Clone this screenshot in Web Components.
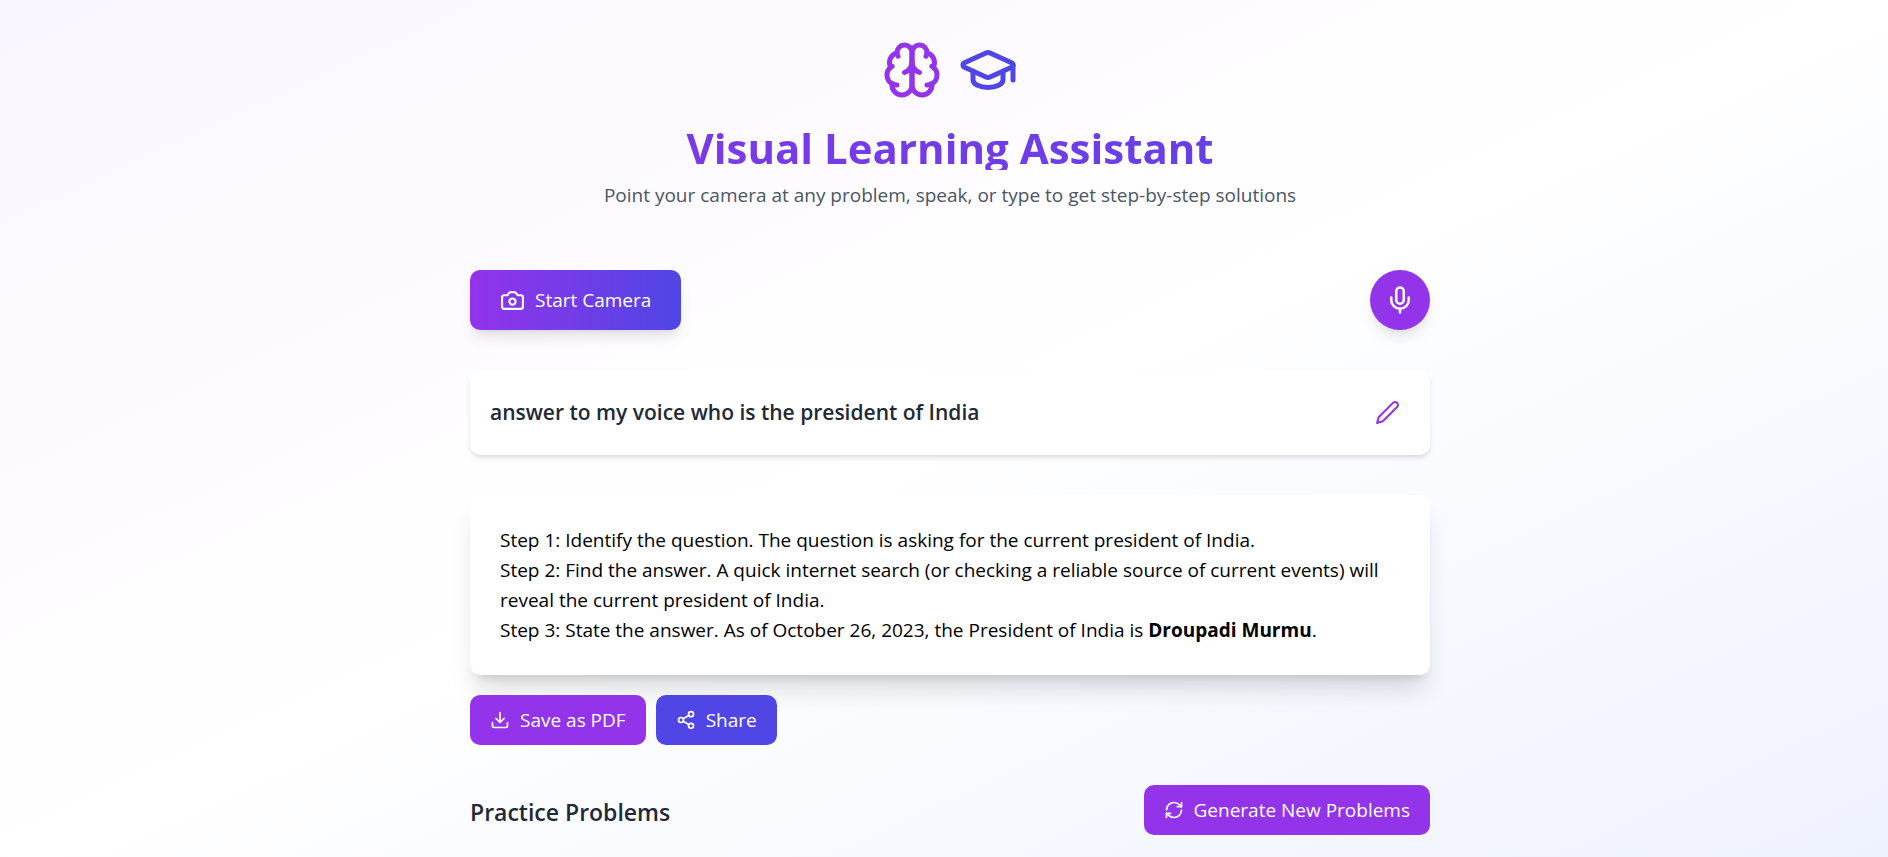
<!DOCTYPE html>
<html lang="en">
<head>
<meta charset="utf-8">
<meta name="viewport" content="width=device-width, initial-scale=1">
<title>Visual Learning Assistant</title>
<style>
  body {
    margin: 0;
    font: 400 19px/30px "Open Sans", "Noto Sans", sans-serif;
    color: #000;
    --purple: #9333ea;
    --indigo: #4f46e5;
    --ink: #1f2937;
    --muted: #4b5563;
  }
</style>
</head>
<body>
<learning-app>
  <app-header slot="header">
    Visual Learning Assistant
    <span slot="tagline">Point your camera at any problem, speak, or type to get step-by-step solutions</span>
  </app-header>
  <split-row>
    <app-button variant="gradient" size="large" icon="camera">Start Camera</app-button>
    <icon-button slot="end" variant="round" icon="mic" label="Start voice input"></icon-button>
  </split-row>
  <question-card>
    answer to my voice who is the president of India
    <icon-button slot="action" icon="pencil" label="Edit question"></icon-button>
  </question-card>
  <solution-panel>
    <p>Step 1: Identify the question. The question is asking for the current president of India.</p>
    <p>Step 2: Find the answer. A quick internet search (or checking a reliable source of current events) will reveal the current president of India.</p>
    <p>Step 3: State the answer. As of October 26, 2023, the President of India is <strong>Droupadi Murmu</strong>.</p>
    <app-button slot="actions" icon="download">Save as PDF</app-button>
    <app-button slot="actions" variant="indigo" icon="share">Share</app-button>
  </solution-panel>
  <split-row>
    <section-title>Practice Problems</section-title>
    <app-button slot="end" icon="refresh">Generate New Problems</app-button>
  </split-row>
</learning-app>

<script>
  const ICONS = {
    brain: '<path d="M12 5a3 3 0 1 0-5.997.125 4 4 0 0 0-2.526 5.77 4 4 0 0 0 .556 6.588A4 4 0 1 0 12 18Z"/><path d="M12 5a3 3 0 1 1 5.997.125 4 4 0 0 1 2.526 5.77 4 4 0 0 1-.556 6.588A4 4 0 1 1 12 18Z"/><path d="M15 13a4.5 4.5 0 0 1-3-4 4.5 4.5 0 0 1-3 4"/><path d="M17.599 6.5a3 3 0 0 0 .399-1.375"/><path d="M6.003 5.125A3 3 0 0 0 6.401 6.5"/><path d="M3.477 10.896a4 4 0 0 1 .585-.396"/><path d="M19.938 10.5a4 4 0 0 1 .585.396"/><path d="M6 18a4 4 0 0 1-1.967-.516"/><path d="M19.967 17.484A4 4 0 0 1 18 18"/>',
    cap: '<path d="M21.42 10.922a1 1 0 0 0-.019-1.838L12.83 5.18a2 2 0 0 0-1.66 0L2.6 9.08a1 1 0 0 0 0 1.832l8.57 3.908a2 2 0 0 0 1.66 0z"/><path d="M22 10v6"/><path d="M6 12.5V16a6 3 0 0 0 12 0v-3.5"/>',
    camera: '<path d="M14.5 4h-5L7 7H4a2 2 0 0 0-2 2v9a2 2 0 0 0 2 2h16a2 2 0 0 0 2-2V9a2 2 0 0 0-2-2h-3l-2.5-3z"/><circle cx="12" cy="13" r="3"/>',
    mic: '<path d="M12 2a3 3 0 0 0-3 3v7a3 3 0 0 0 6 0V5a3 3 0 0 0-3-3Z"/><path d="M19 10v2a7 7 0 0 1-14 0v-2"/><path d="M12 19v3"/>',
    pencil: '<path d="M17 3a2.85 2.83 0 1 1 4 4L7.5 20.5 2 22l1.5-5.5Z"/>',
    download: '<path d="M21 15v4a2 2 0 0 1-2 2H5a2 2 0 0 1-2-2v-4"/><path d="m7 10 5 5 5-5"/><path d="M12 15V3"/>',
    share: '<circle cx="18" cy="5" r="3"/><circle cx="6" cy="12" r="3"/><circle cx="18" cy="19" r="3"/><path d="m8.59 13.51 6.83 3.98"/><path d="m15.41 6.51-6.82 3.98"/>',
    refresh: '<path d="M3 12a9 9 0 0 1 9-9 9.75 9.75 0 0 1 6.74 2.74L21 8"/><path d="M21 3v5h-5"/><path d="M21 12a9 9 0 0 1-9 9 9.75 9.75 0 0 1-6.74-2.74L3 16"/><path d="M8 16H3v5"/>'
  };

  const define = (name, render) => customElements.define(name, class extends HTMLElement {
    connectedCallback() {
      if (!this.shadowRoot) this.attachShadow({ mode: 'open' }).innerHTML = render(this);
    }
  });

  define('app-icon', el => `
    <style>
      :host { display: block; flex: none; width: 20px; height: 20px; }
      svg { display: block; width: 100%; height: 100%; fill: none; stroke: currentColor;
            stroke-width: 2; stroke-linecap: round; stroke-linejoin: round; }
    </style>
    <svg viewBox="0 0 24 24" aria-hidden="true">${ICONS[el.getAttribute('name')]}</svg>`);

  define('app-button', el => `
    <style>
      :host { display: block; }
      button { display: flex; align-items: center; gap: 10px; margin: 0; padding: 10px 20px;
               border: 0; border-radius: 10px; font: inherit; color: #fff;
               background: var(--purple); cursor: pointer; white-space: nowrap; }
      :host([variant="indigo"]) button { background: var(--indigo); }
      :host([variant="gradient"]) button { background: linear-gradient(to right, var(--purple), var(--indigo));
               box-shadow: 0 10px 15px -3px rgb(0 0 0 / .1), 0 4px 6px -4px rgb(0 0 0 / .1); }
      :host([size="large"]) button { padding: 15px 30px; }
      :host([size="large"]) app-icon { width: 25px; height: 25px; }
    </style>
    <button type="button"><app-icon name="${el.getAttribute('icon')}"></app-icon><slot></slot></button>`);

  define('icon-button', el => `
    <style>
      :host { display: block; flex: none; }
      button { display: block; margin: 0; padding: 10px; border: 0; border-radius: 50%;
               background: none; color: var(--purple); cursor: pointer; }
      app-icon { width: 25px; height: 25px; }
      :host([variant="round"]) button { padding: 15px; background: var(--purple); color: #fff;
               box-shadow: 0 10px 15px -3px rgb(0 0 0 / .1), 0 4px 6px -4px rgb(0 0 0 / .1); }
      :host([variant="round"]) app-icon { width: 30px; height: 30px; }
    </style>
    <button type="button" aria-label="${el.getAttribute('label')}"><app-icon name="${el.getAttribute('icon')}"></app-icon></button>`);

  define('app-header', () => `
    <style>
      :host { display: block; text-align: center; }
      .icons { display: flex; justify-content: center; gap: 16px; margin-bottom: 20px; }
      app-icon { width: 60px; height: 60px; }
      .brain { color: var(--purple); }
      .cap { color: var(--indigo); }
      h1 { margin: 0 0 10px; padding-top: 6px; font-size: 42px; line-height: 44px; font-weight: 700;
           color: transparent; background: linear-gradient(to right, var(--purple), var(--indigo));
           -webkit-background-clip: text; background-clip: text; }
      p { margin: 0; color: var(--muted); }
    </style>
    <div class="icons"><app-icon class="brain" name="brain"></app-icon><app-icon class="cap" name="cap"></app-icon></div>
    <h1><slot></slot></h1>
    <p><slot name="tagline"></slot></p>`);

  define('split-row', () => `
    <style>
      :host { display: flex; flex-wrap: wrap; align-items: center; justify-content: space-between; gap: 20px; }
    </style>
    <slot></slot><slot name="end"></slot>`);

  define('question-card', () => `
    <style>
      :host { display: flex; align-items: center; justify-content: space-between; gap: 20px;
              padding: 20px; border-radius: 10px; background: #fff;
              box-shadow: 0 4px 6px -1px rgb(0 0 0 / .1), 0 2px 4px -2px rgb(0 0 0 / .1); }
      h2 { margin: 0; font-size: 21px; line-height: 35px; font-weight: 600; color: var(--ink); }
    </style>
    <h2><slot></slot></h2><slot name="action"></slot>`);

  define('solution-panel', () => `
    <style>
      :host { display: block; }
      .card { padding: 30px; border-radius: 10px; background: #fff;
              box-shadow: 0 20px 25px -5px rgb(0 0 0 / .13), 0 8px 10px -6px rgb(0 0 0 / .12); }
      ::slotted(p) { margin: 0; }
      .actions { display: flex; flex-wrap: wrap; gap: 10px; margin-top: 20px; position: relative; }
    </style>
    <div class="card"><slot></slot></div>
    <div class="actions"><slot name="actions"></slot></div>`);

  define('section-title', () => `
    <style>
      :host { display: block; padding-top: 4px; }
      h2 { margin: 0; font-size: 23px; line-height: 40px; font-weight: 600; color: var(--ink); }
    </style>
    <h2><slot></slot></h2>`);

  define('learning-app', () => `
    <style>
      :host { display: block; box-sizing: border-box; min-height: 100vh; padding: 40px 20px 40px 32px;
              background: linear-gradient(to bottom right, #faf5ff, #fff, #eef2ff); }
      header { margin-bottom: 60px; }
      main { display: flex; flex-direction: column; gap: 40px; max-width: 960px; margin: 0 auto; }
    </style>
    <header><slot name="header"></slot></header>
    <main><slot></slot></main>`);
</script>
</body>
</html>
